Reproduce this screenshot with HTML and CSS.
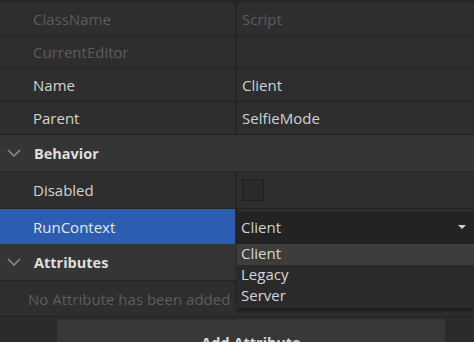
FILE: index.html
```html
<!DOCTYPE html>
<html lang="en">
<head>
  <meta charset="UTF-8">
  <title>Properties</title>
  <link rel="stylesheet" href="styles.css">
</head>
<body>

  <div class="panel">
    <div class="prop prop--top">
      <div class="prop__name muted">ClassName</div>
      <div class="prop__value muted">Script</div>
    </div>
    <div class="prop">
      <div class="prop__name muted">CurrentEditor</div>
      <div class="prop__value"></div>
    </div>
    <div class="prop">
      <div class="prop__name">Name</div>
      <div class="prop__value">Client</div>
    </div>
    <div class="prop">
      <div class="prop__name">Parent</div>
      <div class="prop__value">SelfieMode</div>
    </div>

    <!-- Behavior -->
    <div class="section">
      <svg class="chev" width="14" height="8" viewBox="0 0 14 8"><polyline points="1,1 7,7 13,1" fill="none" stroke="#8a8a8a" stroke-width="1.6"/></svg>
      <span>Behavior</span>
    </div>
    <div class="prop prop--tall">
      <div class="prop__name">Disabled</div>
      <div class="prop__value"><span class="checkbox"></span></div>
    </div>
    <div class="prop prop--selected">
      <div class="prop__name">RunContext</div>
      <div class="prop__value">
        <div class="select">
          <span>Client</span>
          <span class="select__arrow"></span>
        </div>
        <ul class="menu">
          <li class="menu__item menu__item--hover">Client</li>
          <li class="menu__item">Legacy</li>
          <li class="menu__item">Server</li>
        </ul>
      </div>
    </div>

    <!-- Attributes -->
    <div class="section">
      <svg class="chev" width="14" height="8" viewBox="0 0 14 8"><polyline points="1,1 7,7 13,1" fill="none" stroke="#8a8a8a" stroke-width="1.6"/></svg>
      <span>Attributes</span>
    </div>
    <div class="empty muted">No Attribute has been added</div>

    <div class="footer">
      <button class="add-btn">Add Attribute</button>
    </div>
  </div>

</body>
</html>
```

FILE: styles.css
```css
body {
  margin: 0;
  background: #2e2e2e;
  font-family: "Open Sans", "Noto Sans", sans-serif;
  font-size: 15px;
  color: #d2d2d2;
  overflow: hidden;
}

.panel {
  width: 474px;
  height: 342px;
  border-top: 3px solid #262626;
  box-sizing: border-box;
}

.muted {
  color: #5c5c5c;
}

/* property rows */
.prop {
  display: grid;
  grid-template-columns: 237px 1fr;
  height: 33px;
  border-bottom: 1px solid #232323;
  box-sizing: border-box;
}

.prop--tall {
  height: 37px;
}

.prop__name {
  display: flex;
  align-items: center;
  padding-left: 33px;
  border-right: 2px solid #252525;
}

.prop__value {
  position: relative;
  display: flex;
  align-items: center;
  padding-left: 5px;
}

.prop--selected {
  height: 35px;
  border-bottom: none;
}

.prop--selected .prop__name {
  background: #2d5db1;
  color: #e6e6e6;
  border-right-color: #242424;
}

.prop--selected .prop__value {
  padding-left: 0;
  align-items: flex-end;
}

.checkbox {
  width: 20px;
  height: 20px;
  background: #2a2a2a;
  border: 1px solid #1e1e1e;
}

/* dropdown */
.select {
  flex: 1;
  height: 33px;
  display: flex;
  align-items: center;
  justify-content: space-between;
  padding: 0 8px 3px 4px;
  background: #232323;
  border-top: 1px solid #2a2a2a;
  box-sizing: border-box;
}

.select__arrow {
  width: 0;
  height: 0;
  border-left: 4px solid transparent;
  border-right: 4px solid transparent;
  border-top: 4px solid #cfcfcf;
}

.menu {
  position: absolute;
  top: 100%;
  left: 0;
  right: 0;
  margin: 0;
  padding: 0 0 1px;
  list-style: none;
  background: #2a2a2a;
  box-shadow: 0 3px 4px rgba(0, 0, 0, 0.45);
  z-index: 2;
}

.menu__item {
  height: 21px;
  line-height: 19px;
  padding-left: 4px;
  color: #d6d6d6;
}

.menu__item--hover {
  background: #3d3d3d;
}

/* sections */
.section {
  display: flex;
  align-items: center;
  height: 37px;
  background: #353535;
  border-bottom: 1px solid #262626;
  box-sizing: border-box;
  font-weight: bold;
  font-size: 14.5px;
  color: #dedede;
}

.chev {
  margin: 0 13px 0 7px;
}

.empty {
  height: 36px;
  display: flex;
  align-items: center;
  padding-left: 28px;
  border-bottom: 1px solid #232323;
  box-sizing: border-box;
  background: #2e2e2e;
}

.footer {
  display: flex;
  padding: 2px 29px 0 57px;
  background: #2b2b2b;
}

.add-btn {
  flex: 1;
  height: 34px;
  background: #383838;
  border: none;
  border-top: 1px solid #333;
  color: #d8d8d8;
  font-family: inherit;
  font-size: 14.5px;
  font-weight: bold;
  padding-top: 12px;
}
```
